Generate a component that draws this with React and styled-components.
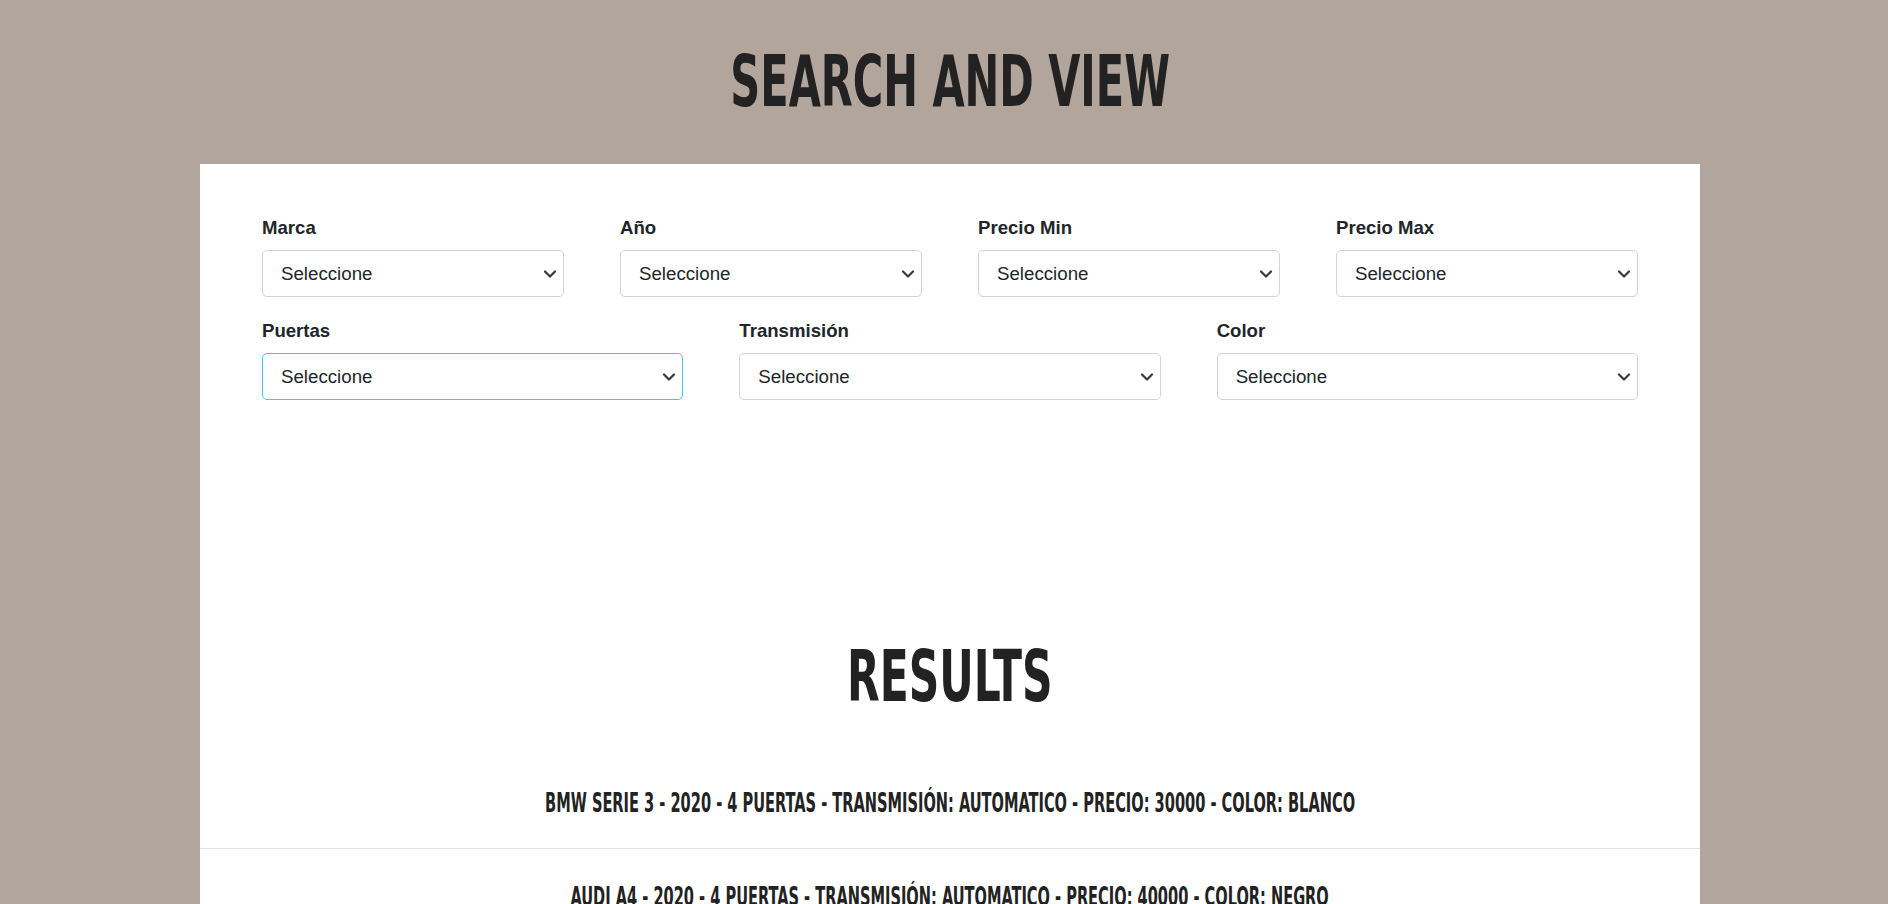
import React from "react"
import styled, { createGlobalStyle } from "styled-components"

const GlobalStyle = createGlobalStyle`
    body {
        margin: 0;
        padding-left: 12px;
        background: #b2a59b;
        font-family: "Liberation Sans", Arial, sans-serif;
        color: #212529;
    }
`

const Display = styled.span`
    display: inline-block;
    font-family: "DejaVu Sans Condensed", "Liberation Sans", sans-serif;
    font-weight: 700;
    text-transform: uppercase;
    color: #222222;
    transform: scaleX(${({scale}) => scale});
    transform-origin: center;
    white-space: nowrap;
`

const Title = styled.h1`
    margin: 46px 0 47px;
    text-align: center;
    font-size: 71px;
    line-height: 1;
`

const Card = styled.main`
    width: 1500px;
    margin: 0 auto;
    background: #ffffff;
`

const Filters = styled.form`
    display: flex;
    flex-direction: column;
    gap: 20px;
    padding: 50px 62px 0;
`

const FilterRow = styled.div`
    display: grid;
    grid-template-columns: repeat(${({cols}) => cols}, 1fr);
    column-gap: 56px;
`

const Field = styled.div`
    display: flex;
    flex-direction: column;
`

const Label = styled.label`
    font-size: 18.6px;
    font-weight: 700;
    line-height: 27px;
    margin-bottom: 9px;
    color: #212529;
`

const SelectWrap = styled.div`
    position: relative;
    svg {
        position: absolute;
        right: 7px;
        top: 50%;
        margin-top: -5px;
        pointer-events: none;
    }
`

const Select = styled.select`
    width: 100%;
    height: 47px;
    box-sizing: border-box;
    appearance: none;
    background: #ffffff;
    border: 1px solid ${({focused}) => focused ? "#4fc0ea" : "#d0d4d8"};
    border-radius: 5px;
    padding: 0 40px 0 18px;
    font-family: "Liberation Sans", Arial, sans-serif;
    font-size: 18.7px;
    color: #212529;
    outline: none;
`

const Results = styled.section`
    padding-top: 240px;
`

const ResultsTitle = styled.h2`
    margin: 0 0 43px;
    text-align: center;
    font-size: 72px;
    line-height: 1;
`

const List = styled.ul`
    list-style: none;
    margin: 0;
    padding: 0;
`

const Item = styled.li`
    padding: 35px 0 32px;
    text-align: center;
    font-size: 26px;
    line-height: 26px;
    border-bottom: 1px solid #e2e2e2;
`

const Chevron = () => (
    <svg width="14" height="10" viewBox="0 0 14 10">
        <path d="M2 2.5l5 5 5-5" fill="none" stroke="#343a40" strokeWidth="2.2" strokeLinecap="round" strokeLinejoin="round" />
    </svg>
)

const FilterField = ({ label, focused }) => (
    <Field>
        <Label>{label}</Label>
        <SelectWrap>
            <Select focused={focused ? 1 : 0} defaultValue="">
                <option value="">Seleccione</option>
            </Select>
            <Chevron />
        </SelectWrap>
    </Field>
)

const cars = [
    "BMW Serie 3 - 2020 - 4 puertas - Transmisión: automatico - Precio: 30000 - Color: blanco",
    "Audi A4 - 2020 - 4 puertas - Transmisión: automatico - Precio: 40000 - Color: negro",
    "Mercedes Benz Clase C - 2020 - 4 puertas - Transmisión: automatico - Precio: 35000 - Color: negro",
]

export default function App() {
    return (
        <>
            <GlobalStyle />
            <Title><Display scale={0.65}>Search and View</Display></Title>
            <Card>
                <Filters>
                    <FilterRow cols={4}>
                        <FilterField label="Marca" />
                        <FilterField label="Año" />
                        <FilterField label="Precio Min" />
                        <FilterField label="Precio Max" />
                    </FilterRow>
                    <FilterRow cols={3}>
                        <FilterField label="Puertas" focused />
                        <FilterField label="Transmisión" />
                        <FilterField label="Color" />
                    </FilterRow>
                </Filters>
                <Results>
                    <ResultsTitle><Display scale={0.655}>Results</Display></ResultsTitle>
                    <List>
                        {cars.map(car => (
                            <Item key={car}><Display scale={0.624}>{car}</Display></Item>
                        ))}
                    </List>
                </Results>
            </Card>
        </>
    )
}
